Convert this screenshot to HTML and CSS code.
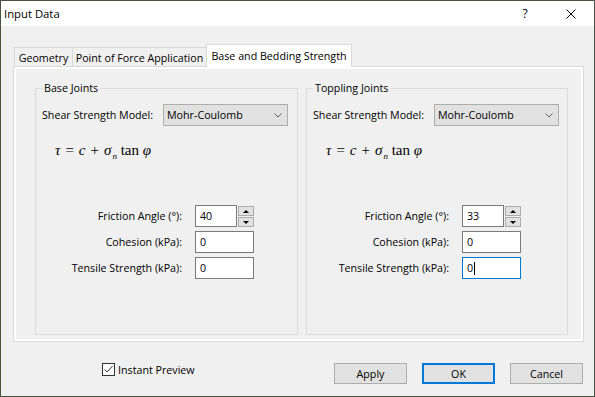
FILE: index.html
```html
<!DOCTYPE html>
<html>
<head>
<meta charset="utf-8">
<title>Input Data</title>
<link rel="stylesheet" href="styles.css">
</head>
<body>
<div class="window">
  <div class="titlebar">
    <div class="title">Input Data</div>
    <div class="caption-btn help">?</div>
    <div class="caption-btn close">
      <svg width="10" height="10" viewBox="0 0 10 10"><path d="M0.5 0.5L9.5 9.5M9.5 0.5L0.5 9.5" stroke="#000" stroke-width="1" fill="none"/></svg>
    </div>
  </div>
  <div class="body">
    <div class="tabs">
      <div class="tab tab-geo">Geometry</div>
      <div class="tab tab-pofa">Point of Force Application</div>
      <div class="tab active">Base and Bedding Strength</div>
    </div>
    <div class="panel">
      <div class="page">
        <fieldset class="group g-left">
          <legend>Base Joints</legend>
          <div class="model-row">
            <span class="model-lbl">Shear Strength Model:</span>
            <div class="select"><span>Mohr-Coulomb</span><svg class="chev" width="8" height="5" viewBox="0 0 8 5"><path d="M0.5 0.5L4 4L7.5 0.5" stroke="#606060" fill="none"/></svg></div>
          </div>
          <div class="formula"><i>τ</i><span class="op">=</span><i>c</i><span class="op">+</span><i>σ</i><sub>n</sub> tan <i>φ</i></div>
          <div class="params">
            <label class="lab">Friction Angle (°):</label>
            <div class="spin"><div class="field">40</div><div class="spinner"><div class="sb up"></div><div class="sb down"></div></div></div>
            <label class="lab">Cohesion (kPa):</label>
            <div class="field">0</div>
            <label class="lab">Tensile Strength (kPa):</label>
            <div class="field">0</div>
          </div>
        </fieldset>
        <fieldset class="group g-right">
          <legend>Toppling Joints</legend>
          <div class="model-row">
            <span class="model-lbl">Shear Strength Model:</span>
            <div class="select"><span>Mohr-Coulomb</span><svg class="chev" width="8" height="5" viewBox="0 0 8 5"><path d="M0.5 0.5L4 4L7.5 0.5" stroke="#606060" fill="none"/></svg></div>
          </div>
          <div class="formula"><i>τ</i><span class="op">=</span><i>c</i><span class="op">+</span><i>σ</i><sub>n</sub> tan <i>φ</i></div>
          <div class="params">
            <label class="lab">Friction Angle (°):</label>
            <div class="spin"><div class="field">33</div><div class="spinner"><div class="sb up"></div><div class="sb down"></div></div></div>
            <label class="lab">Cohesion (kPa):</label>
            <div class="field">0</div>
            <label class="lab">Tensile Strength (kPa):</label>
            <div class="field focus">0<span class="caret"></span></div>
          </div>
        </fieldset>
      </div>
    </div>
    <div class="footer">
      <div class="check">
        <span class="box"><svg width="11" height="11" viewBox="0 0 11 11"><path d="M1.5 5.5L4 8L9.5 2" stroke="#333" stroke-width="1" fill="none"/></svg></span>
        <span>Instant Preview</span>
      </div>
      <div class="buttons">
        <div class="btn">Apply</div>
        <div class="btn default">OK</div>
        <div class="btn">Cancel</div>
      </div>
    </div>
  </div>
</div>
</body>
</html>
```

FILE: styles.css
```css
* { box-sizing: border-box; }
html, body { margin: 0; padding: 0; }
body {
  width: 595px;
  height: 397px;
  overflow: hidden;
  font-family: "Open Sans", "Noto Sans", sans-serif;
  font-size: 10.7px;
  color: #000;
  background: #f0f0f0;
}
.window {
  width: 595px;
  height: 397px;
  border: 1px solid #4a5340;
  background: #f0f0f0;
  display: flex;
  flex-direction: column;
}
.titlebar {
  height: 25px;
  flex: none;
  background: #fff;
  display: flex;
  align-items: center;
}
.title { flex: 1; padding-left: 3px; font-size: 11.3px; }
.caption-btn {
  width: 46px;
  height: 25px;
  display: flex;
  align-items: center;
  justify-content: center;
}
.help { font-size: 12px; }
.body {
  flex: 1;
  display: flex;
  flex-direction: column;
  padding-top: 18px;
}
.tabs {
  display: flex;
  align-items: flex-end;
  height: 22px;
  padding-left: 13px;
}
.tab {
  height: 19px;
  border: 1px solid #d9d9d9;
  border-bottom: none;
  background: #f0f0f0;
  display: flex;
  align-items: center;
  justify-content: center;
  padding-top: 1px;
}
.tab + .tab { margin-left: -1px; }
.tab-geo { width: 59px; }
.tab-pofa { width: 135px; }
.tab.active {
  width: 146px;
  height: 23px;
  margin-bottom: -1px;
  background: #fff;
  position: relative;
  z-index: 1;
  padding-top: 0;
}
.panel {
  margin-left: 12px;
  width: 571px;
  height: 276px;
  border: 1px solid #d9d9d9;
  background: #fff;
  padding: 2px;
  display: flex;
}
.page {
  flex: 1;
  background: #f0f0f0;
  display: flex;
  gap: 8px;
  padding: 12px 13px 4px 19px;
}
.group {
  margin: 0;
  padding: 0 6px;
  border: 1px solid #dcdcdc;
  min-width: 0;
}
.g-left { width: 263px; --lab: 140px; }
.g-right { width: 262px; --lab: 136px; }
legend {
  padding: 0 2px;
  margin-left: 0;
  line-height: 14px;
}
.model-row {
  display: flex;
  align-items: center;
  margin-top: 9px;
}
.model-lbl { width: 121px; flex: none; }
.select {
  width: 125px;
  height: 22px;
  background: #e1e1e1;
  border: 1px solid #adadad;
  display: flex;
  align-items: center;
  justify-content: space-between;
  padding: 0 5px 0 3px;
}
.chev { display: block; }
.formula {
  margin: 15px 0 0 13px;
  font-family: "Liberation Serif", serif;
  font-size: 15px;
  line-height: 18px;
  height: 18px;
  white-space: nowrap;
}
.formula .op { margin: 0 5px; }
.formula sub { font-size: 9px; font-style: italic; vertical-align: -4px; margin: 0 0 0 1px; }
.params {
  display: grid;
  grid-template-columns: var(--lab) 59px;
  column-gap: 13px;
  row-gap: 4px;
  margin-top: 46px;
}
.lab { text-align: right; align-self: center; }
.field {
  height: 22px;
  border: 1px solid #7a7a7a;
  background: #fff;
  padding-left: 4px;
  display: flex;
  align-items: center;
}
.field.focus { border-color: #0078d7; }
.caret { width: 1px; height: 13px; background: #000; margin-left: 1px; }
.spin { display: flex; height: 22px; }
.spin .field { width: 42px; flex: none; }
.spinner {
  width: 17px;
  display: flex;
  flex-direction: column;
  justify-content: space-between;
  padding: 1px 0 0 1px;
}
.sb {
  height: 10px;
  background: #e1e1e1;
  border: 1px solid #adadad;
  display: flex;
  align-items: center;
  justify-content: center;
}
.sb::before {
  content: "";
  border-left: 3px solid transparent;
  border-right: 3px solid transparent;
}
.sb.up::before { border-bottom: 3px solid #000; }
.sb.down::before { border-top: 3px solid #000; }
.footer {
  display: flex;
  align-items: flex-start;
  padding-top: 21px;
}
.check {
  display: flex;
  align-items: center;
  gap: 3px;
  margin-left: 101px;
  height: 13px;
}
.box {
  width: 13px;
  height: 13px;
  border: 1px solid #333;
  background: #fff;
  display: flex;
}
.box svg { display: block; }
.buttons {
  margin-left: auto;
  margin-right: 11px;
  display: flex;
  gap: 15px;
}
.btn {
  width: 73px;
  height: 21px;
  background: #e1e1e1;
  border: 1px solid #adadad;
  display: flex;
  align-items: center;
  justify-content: center;
}
.btn.default { border: 2px solid #0078d7; }
```
